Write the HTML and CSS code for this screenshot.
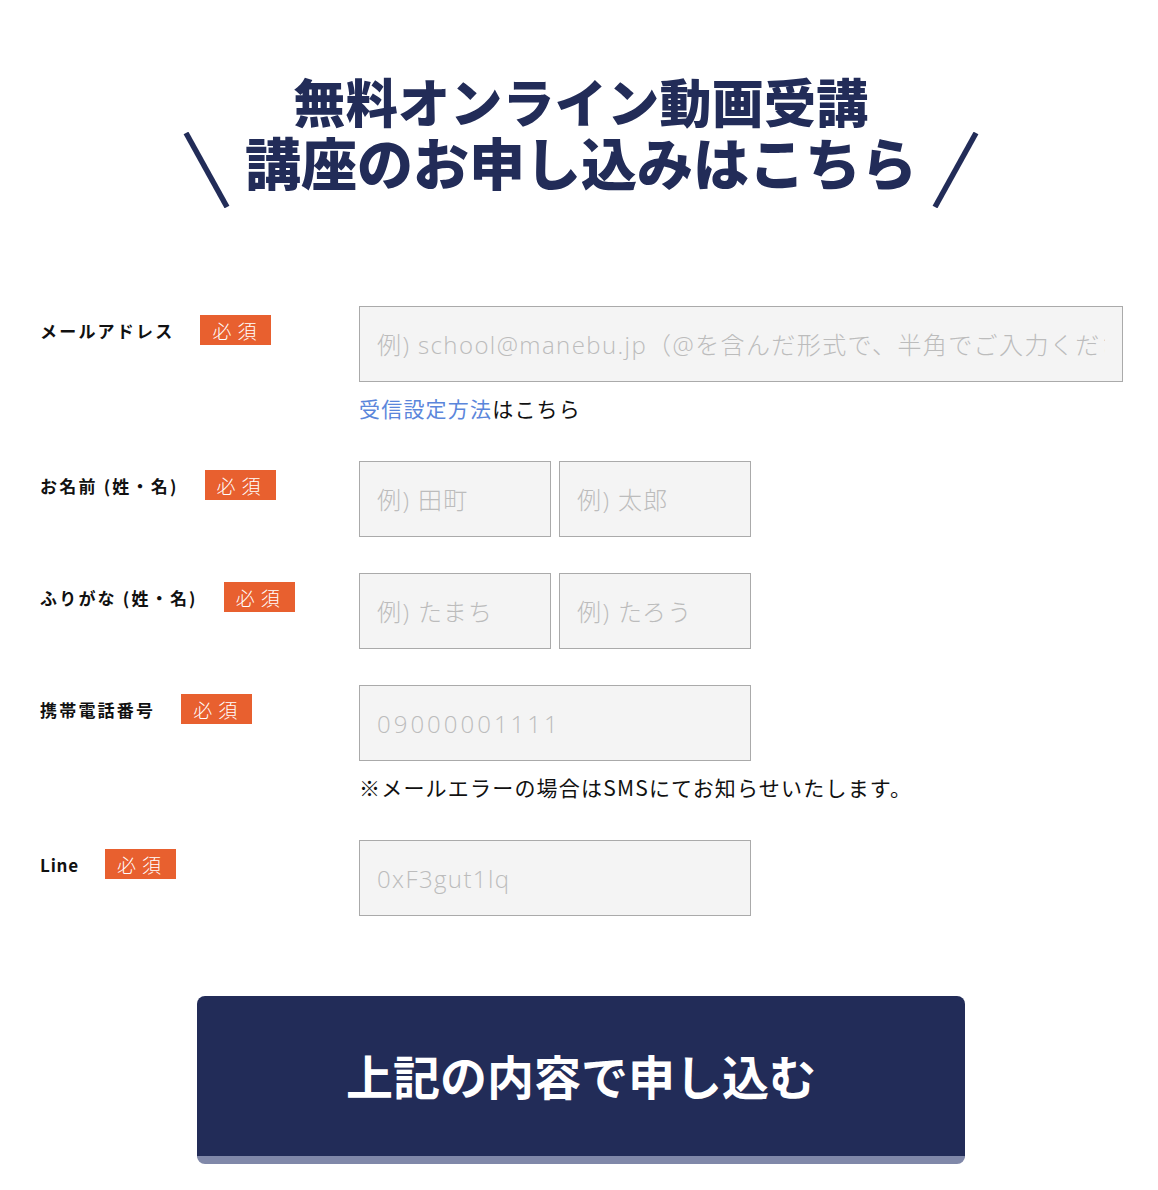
FILE: index.html
```html
<!DOCTYPE html>
<html lang="ja">
<head>
<meta charset="utf-8">
<title>無料オンライン動画受講 講座のお申し込み</title>
<link rel="stylesheet" href="styles.css">
</head>
<body>
<div class="page">
  <h1 class="title">
    <span class="title-line1">無料オンライン動画受講</span>
    <span class="title-line2">
      <svg class="slash" width="47" height="76" viewBox="0 0 47 76" aria-hidden="true"><line x1="3" y1="1" x2="44" y2="75" stroke="#222c58" stroke-width="5.5"/></svg>
      <span class="title-text">講座のお申し込みはこちら</span>
      <svg class="slash" width="47" height="76" viewBox="0 0 47 76" aria-hidden="true"><line x1="44" y1="1" x2="3" y2="75" stroke="#222c58" stroke-width="5.5"/></svg>
    </span>
  </h1>

  <form class="form">
    <div class="row">
      <div class="label-col"><span class="label">メールアドレス</span><span class="badge">必須</span></div>
      <div class="field-col">
        <input class="input input-wide" type="text" placeholder="例) school@manebu.jp（@を含んだ形式で、半角でご入力ください）">
        <p class="note"><a class="link" href="#">受信設定方法</a>はこちら</p>
      </div>
    </div>

    <div class="row">
      <div class="label-col"><span class="label">お名前 (姓・名)</span><span class="badge">必須</span></div>
      <div class="field-col">
        <div class="pair">
          <input class="input input-half" type="text" placeholder="例) 田町">
          <input class="input input-half" type="text" placeholder="例) 太郎">
        </div>
      </div>
    </div>

    <div class="row">
      <div class="label-col"><span class="label">ふりがな (姓・名)</span><span class="badge">必須</span></div>
      <div class="field-col">
        <div class="pair">
          <input class="input input-half" type="text" placeholder="例) たまち">
          <input class="input input-half" type="text" placeholder="例) たろう">
        </div>
      </div>
    </div>

    <div class="row">
      <div class="label-col"><span class="label">携帯電話番号</span><span class="badge">必須</span></div>
      <div class="field-col">
        <input class="input input-mid input-tel" type="text" placeholder="09000001111">
        <p class="note">※メールエラーの場合はSMSにてお知らせいたします。</p>
      </div>
    </div>

    <div class="row">
      <div class="label-col"><span class="label label-latin">Line</span><span class="badge">必須</span></div>
      <div class="field-col">
        <input class="input input-mid" type="text" placeholder="0xF3gut1lq">
      </div>
    </div>

    <button class="submit" type="button">上記の内容で申し込む</button>
  </form>
</div>
</body>
</html>
```

FILE: styles.css
```css
html, body {
  margin: 0;
  padding: 0;
  background: #ffffff;
}

body {
  font-family: "Noto Sans CJK JP", "Noto Sans", sans-serif;
  color: #111111;
}

.page {
  padding: 71px 36px 0 40px;
}

.title {
  margin: 0;
  display: flex;
  flex-direction: column;
  align-items: center;
  color: #222c58;
  font-weight: 900;
}

.title-line1 {
  font-size: 52px;
  line-height: 60px;
  letter-spacing: 0.3px;
}

.title-line2 {
  display: flex;
  align-items: flex-start;
  gap: 15px;
}

.title-text {
  font-size: 56px;
  line-height: 60px;
}

.slash {
  display: block;
  margin-top: 1px;
}

.form {
  margin-top: 98px;
  display: flex;
  flex-direction: column;
  gap: 36px;
}

.row {
  display: flex;
  align-items: flex-start;
}

.label-col {
  width: 319px;
  flex-shrink: 0;
  display: flex;
  align-items: center;
  gap: 26px;
  padding-top: 9px;
  height: 30px;
}

.label {
  font-size: 17px;
  font-weight: 700;
  letter-spacing: 2.2px;
  white-space: nowrap;
}

.label-latin {
  letter-spacing: 0.8px;
}

.badge {
  display: inline-flex;
  align-items: center;
  height: 30px;
  padding: 0 9px 0 12px;
  background: #e8602f;
  color: #ffffff;
  font-size: 19px;
  font-weight: 300;
  letter-spacing: 6px;
  line-height: 1;
}

.field-col {
  display: flex;
  flex-direction: column;
}

.pair {
  display: flex;
  gap: 8px;
}

.input {
  box-sizing: border-box;
  height: 76px;
  margin: 0;
  padding: 0 17px;
  border: 1px solid #aaaaaa;
  border-radius: 0;
  background: #f4f4f4;
  font-family: "Open Sans", "Noto Sans CJK JP", sans-serif;
  font-weight: 300;
  font-size: 24px;
  letter-spacing: 1.4px;
  color: #333333;
  outline: none;
}

.input::placeholder {
  color: #bcbcbc;
  opacity: 1;
}

.input-wide {
  width: 764px;
}

.input-half {
  width: 192px;
}

.input-mid {
  width: 392px;
}

.input-tel {
  letter-spacing: 3px;
}

.note {
  margin: 9px 0 0;
  font-size: 21px;
  line-height: 34px;
  letter-spacing: 1.2px;
  color: #111111;
  white-space: nowrap;
}

.link {
  color: #5b86db;
  text-decoration: none;
}

.submit {
  display: block;
  box-sizing: border-box;
  width: 768px;
  height: 168px;
  margin: 44px auto 0;
  padding: 0 0 4px;
  border: none;
  border-bottom: 8px solid #8088a9;
  border-radius: 8px;
  background: #222c58;
  color: #ffffff;
  font-family: "Noto Sans CJK JP", "Noto Sans", sans-serif;
  font-size: 47px;
  font-weight: 700;
  letter-spacing: 0;
  cursor: pointer;
}
```
